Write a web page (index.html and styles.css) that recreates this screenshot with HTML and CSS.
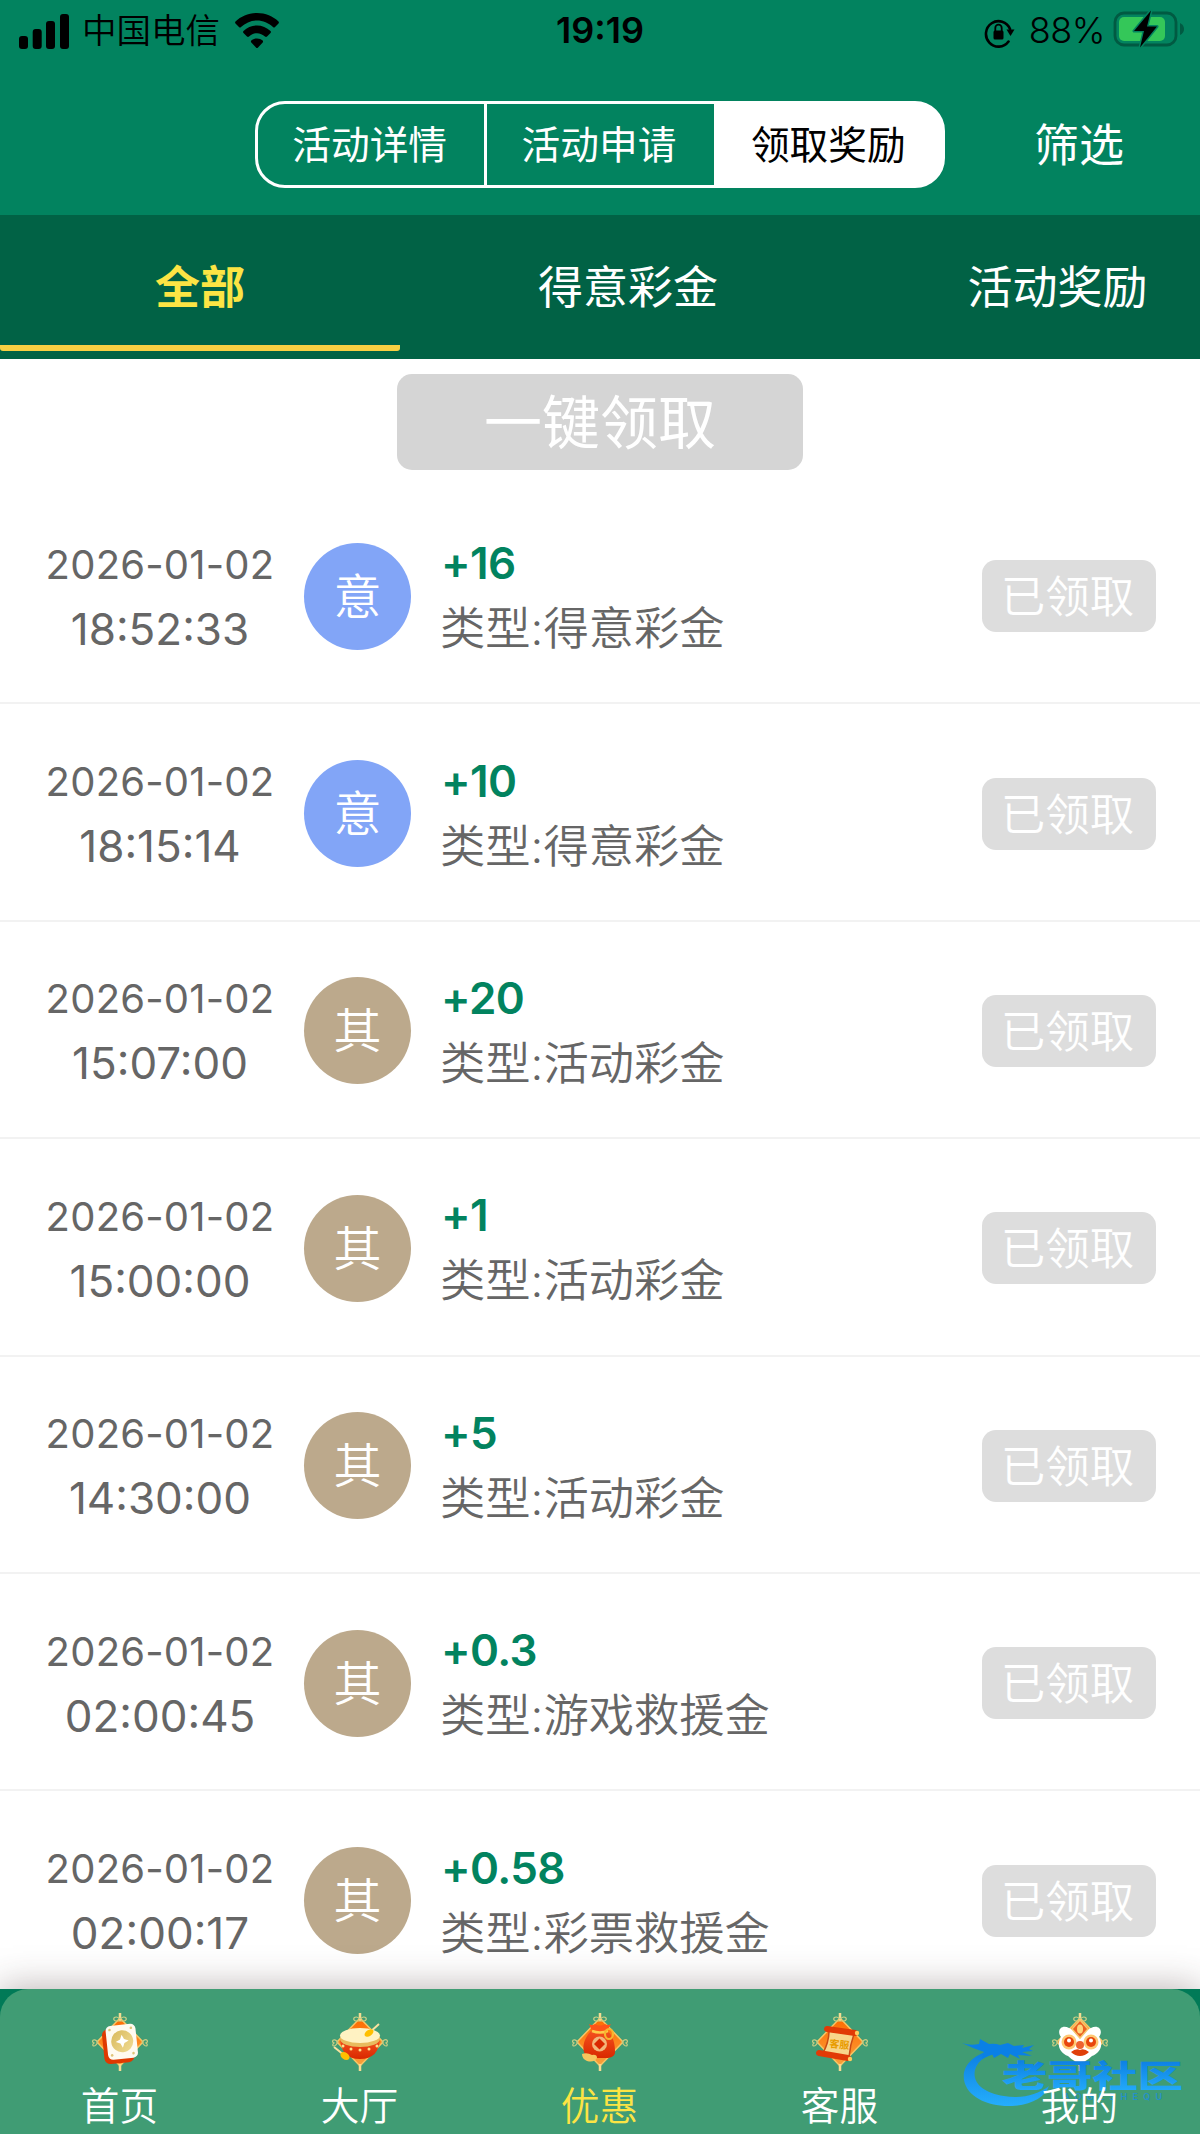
FILE: index.html
```html
<!DOCTYPE html>
<html lang="zh-CN">
<head>
  <meta charset="UTF-8">
  <title>领取奖励</title>
  <link rel="stylesheet" href="styles.css">
</head>
<body>

<div class="app">
  <header class="header">
    <div class="status-bar">
      <div class="status-left">
        <svg class="signal" viewBox="0 0 50 36"><rect x="0" y="22" width="9" height="13" rx="3"/><rect x="13.700" y="15" width="9" height="20" rx="3"/><rect x="27" y="7" width="9" height="28" rx="3"/><rect x="41" y="0" width="9" height="35" rx="3"/></svg>
        <span class="carrier">中国电信</span>
        <svg class="wifi" viewBox="0 0 44 36"><path d="M22 0C13.500 0 6 3.200 0.500 8.500Q-.3 9.500.5 10.400L4 14Q5 15 6 14C10.500 10 16 7.500 22 7.500S33.500 10 38 14Q39 15 40 14L43.500 10.400Q44.300 9.500 43.500 8.500C38 3.200 30.500 0 22 0ZM22 12.500C17 12.500 12.300 14.500 8.500 18Q7.600 19 8.500 20L12 23.500Q13 24.400 14 23.500C16.300 21.500 19 20.200 22 20.200S27.700 21.500 30 23.500Q31 24.400 32 23.500L35.500 20Q36.400 19 35.500 18C31.700 14.500 27 12.500 22 12.500ZM22 25.500C19.800 25.500 17.800 26.200 16.300 27.500Q15.500 28.500 16.300 29.500L21.200 34.700Q22 35.500 22.800 34.700L27.700 29.500Q28.500 28.500 27.700 27.500C26.200 26.200 24.200 25.500 22 25.500Z"/></svg>
      </div>
      <div class="status-time">19:19</div>
      <div class="status-right">
        <svg class="lock" viewBox="0 0 31 32"><path d="M24.500 24.500A12.500 12.700 0 1 1 26 12" fill="none" stroke="#000" stroke-width="2.600" stroke-linecap="round"/><path d="M22.500 12.500H30.500L26.500 19Z"/><rect x="9.500" y="13.500" width="10" height="9" rx="1.500"/><path d="M11.300 14.500V11a3.200 3.300 0 0 1 6.400 0V14.500" fill="none" stroke="#000" stroke-width="1.800"/></svg>
        <span class="percent">88%</span>
        <svg class="battery" viewBox="0 0 72 40"><rect x="2" y="4" width="61" height="32" rx="9" fill="none" stroke="#015a42" stroke-width="2.800"/><rect x="6" y="8" width="46" height="24" rx="5" fill="#34c759"/><path d="M67 14Q71 16 71 20T67 26Z" fill="#015a42"/><path d="M38 1.500L21 22H31L27 38.500L44 17.500H34Z" fill="#000" stroke="#02835f" stroke-width="3" paint-order="stroke" stroke-linejoin="round"/></svg>
      </div>
    </div>
    <div class="toolbar">
      <div class="segment">
        <div class="segment-item">活动详情</div>
        <div class="segment-item">活动申请</div>
        <div class="segment-item selected">领取奖励</div>
      </div>
      <div class="filter">筛选</div>
    </div>
  </header>

  <nav class="tabs">
    <div class="tab active"><span>全部</span></div>
    <div class="tab wide"><span>得意彩金</span></div>
    <div class="tab"><span>活动奖励</span></div>
  </nav>

  <main class="content">
    <button class="claim-all">一键领取</button>
    <div class="list">
      <div class="row">
        <div class="when"><div class="date">2026-01-02</div><div class="time">18:52:33</div></div>
        <div class="avatar blue">意</div>
        <div class="info"><div class="amount">+16</div><div class="type">类型:得意彩金</div></div>
        <div class="badge">已领取</div>
      </div>
      <div class="row">
        <div class="when"><div class="date">2026-01-02</div><div class="time">18:15:14</div></div>
        <div class="avatar blue">意</div>
        <div class="info"><div class="amount">+10</div><div class="type">类型:得意彩金</div></div>
        <div class="badge">已领取</div>
      </div>
      <div class="row">
        <div class="when"><div class="date">2026-01-02</div><div class="time">15:07:00</div></div>
        <div class="avatar">其</div>
        <div class="info"><div class="amount">+20</div><div class="type">类型:活动彩金</div></div>
        <div class="badge">已领取</div>
      </div>
      <div class="row">
        <div class="when"><div class="date">2026-01-02</div><div class="time">15:00:00</div></div>
        <div class="avatar">其</div>
        <div class="info"><div class="amount">+1</div><div class="type">类型:活动彩金</div></div>
        <div class="badge">已领取</div>
      </div>
      <div class="row">
        <div class="when"><div class="date">2026-01-02</div><div class="time">14:30:00</div></div>
        <div class="avatar">其</div>
        <div class="info"><div class="amount">+5</div><div class="type">类型:活动彩金</div></div>
        <div class="badge">已领取</div>
      </div>
      <div class="row">
        <div class="when"><div class="date">2026-01-02</div><div class="time">02:00:45</div></div>
        <div class="avatar">其</div>
        <div class="info"><div class="amount">+0.3</div><div class="type">类型:游戏救援金</div></div>
        <div class="badge">已领取</div>
      </div>
      <div class="row">
        <div class="when"><div class="date">2026-01-02</div><div class="time">02:00:17</div></div>
        <div class="avatar">其</div>
        <div class="info"><div class="amount">+0.58</div><div class="type">类型:彩票救援金</div></div>
        <div class="badge">已领取</div>
      </div>
    </div>
  </main>

  <footer class="bottom">
    <svg class="defs">
      <defs>
        <linearGradient id="orange" x1="0" y1="0" x2="0" y2="1"><stop offset="0" stop-color="#ff6a00"/><stop offset="1" stop-color="#f9a13c"/></linearGradient>
        <linearGradient id="red" x1="0" y1="0" x2="0" y2="1"><stop offset="0" stop-color="#f4511e"/><stop offset="1" stop-color="#d92800"/></linearGradient>
        <linearGradient id="gold" x1="0" y1="0" x2="1" y2="1"><stop offset="0" stop-color="#d9b95c"/><stop offset="1" stop-color="#f0dc94"/></linearGradient>
        <linearGradient id="brand" x1="0" y1="0" x2="0" y2="1"><stop offset="0" stop-color="#0a7be0"/><stop offset="1" stop-color="#25aefc"/></linearGradient>
        <g id="knot">
          <path d="M28 5L51 29L28 53L5 29Z" fill="url(#orange)" stroke="#f8c565" stroke-width="1.500"/>
          <path d="M28 0V8M28 51V58" stroke="#f7dc91" stroke-width="2.500"/>
          <path d="M28 6C23 1 19 7 24 8H32C37 7 33 1 28 6M6 29C1 24-1 29 2 30C-1 32 2 36 6 29M50 29C55 24 57 29 54 30C57 32 54 36 50 29" fill="none" stroke="#c5cd84" stroke-width="1.200"/>
        </g>
      </defs>
    </svg>
    <div class="bottom-bar">
      <div class="nav-item">
        <svg class="nav-icon" viewBox="0 0 56 58"><use href="#knot"/>
          <g transform="rotate(-6 28 31)"><rect x="11" y="15" width="30" height="35" rx="6" fill="#df3900"/><rect x="15" y="12" width="30" height="34" rx="5" fill="#fffaf0"/><circle cx="30.500" cy="28.500" r="11" fill="url(#gold)"/><path d="M30.500 22L32.500 26.500L37 28.500L32.500 30.500L30.500 35L28.500 30.500L24 28.500L28.500 26.500Z" fill="#fff"/><g fill="#dfc478"><circle cx="19" cy="16" r="1.300"/><circle cx="40.500" cy="16" r="1.300"/><circle cx="19" cy="41.500" r="1.300"/><circle cx="40.500" cy="41.500" r="1.300"/></g></g>
        </svg>
        <span>首页</span>
      </div>
      <div class="nav-item">
        <svg class="nav-icon" viewBox="0 0 56 58"><use href="#knot"/>
          <path d="M8 26C9 39 15 46 28 46S47 39 48 26Z" fill="url(#red)"/><ellipse cx="28" cy="26" rx="20" ry="8" fill="#e8bb5e"/><ellipse cx="28" cy="22.500" rx="20" ry="7.500" fill="#fff2c2"/><g fill="#ffe08a"><circle cx="11" cy="33" r="1.500"/><circle cx="19" cy="36" r="1.500"/><circle cx="28" cy="37" r="1.500"/><circle cx="37" cy="36" r="1.500"/><circle cx="45" cy="33" r="1.500"/></g>
          <path d="M47 11L37 20M2 34L12 42" stroke="#f7e2a0" stroke-width="2"/><ellipse cx="37" cy="20" rx="5" ry="3" transform="rotate(-35 37 20)" fill="#ffbf00"/><ellipse cx="13" cy="43" rx="5" ry="3.500" transform="rotate(35 13 43)" fill="#ffbf00"/>
        </svg>
        <span>大厅</span>
      </div>
      <div class="nav-item current">
        <svg class="nav-icon" viewBox="0 0 56 58"><use href="#knot"/>
          <path d="M19 18C13 24 10 33 12 39Q13 45 22 45H36Q44 44 43 38C43 31 41 23 36 18Z" fill="url(#red)"/><path d="M17 11Q20 13 23 11Q28 14 33 11Q36 13 39 11L35 18H20Z" fill="#ff5418"/><path d="M20 18Q28 21 36 18" stroke="#ffca48" stroke-width="2.500" fill="none"/><ellipse cx="37" cy="21" rx="4" ry="5" fill="none" stroke="#f6b52f" stroke-width="2.200"/><circle cx="27.500" cy="31" r="7.500" fill="#f3b57a"/><path d="M27.500 25.500L33 31L27.500 36.500L22 31Z" fill="#da2700"/><path d="M10 41Q15 39 20 42Q25 41 25 45Q22 50 15 48Q10 46 10 41Z" fill="#f6c65e"/>
        </svg>
        <span>优惠</span>
      </div>
      <div class="nav-item">
        <svg class="nav-icon" viewBox="0 0 56 58"><use href="#knot"/>
          <path d="M17 18L42 21Q38 32 37 44L11 40Q17 29 17 18Z" fill="#f8d58a" stroke="#c94a14" stroke-width="1.500"/><path d="M15 16L43 20M7 40L36 45" stroke="#e13a06" stroke-width="6" stroke-linecap="round"/><circle cx="45" cy="20" r="2.200" fill="#ffcb5c"/><circle cx="38" cy="46" r="2.200" fill="#ffcb5c"/>
          <text x="17" y="34" class="scroll-text" transform="rotate(6 17 34)">客服</text>
        </svg>
        <span>客服</span>
      </div>
      <div class="nav-item">
        <svg class="nav-icon" viewBox="0 0 56 58"><use href="#knot"/>
          <path d="M9 24C4 17 10 11 17 15Q22 18 28 18Q34 18 39 15C46 11 52 17 47 24C52 32 48 40 40 43Q34 49 28 49Q22 49 16 43C8 40 4 32 9 24Z" fill="#fff"/>
          <path d="M28 7L36 16L28 25L20 16Z" fill="#ed6122" stroke="#f5c66c" stroke-width="1.500"/><ellipse cx="28" cy="16" rx="3" ry="4.500" fill="#ffd57d"/>
          <circle cx="17" cy="29" r="7.500" fill="#ffc873"/><circle cx="39" cy="29" r="7.500" fill="#ffc873"/><circle cx="17" cy="29" r="5" fill="#e8460c"/><circle cx="39" cy="29" r="5" fill="#e8460c"/><circle cx="17" cy="27.500" r="2" fill="#fff"/><circle cx="39" cy="27.500" r="2" fill="#fff"/><circle cx="28" cy="32" r="4" fill="#ee6330"/><path d="M19 39Q24 35 28 37Q32 35 37 39Q33 43 28 43T19 39Z" fill="#e03f0a"/>
        </svg>
        <span class="on-top">我的</span>
      </div>
    </div>
    <svg class="watermark" viewBox="0 0 230 72">
      <path d="M34 9C10 16 0 27 2 41C5 58 26 68 50 67C70 66 83 58 87 47C75 56 59 60 42 57C22 54 10 44 13 31C16 20 27 15 40 14Z" fill="url(#brand)"/>
      <path d="M0 4Q8 7 17 5L18 0L27 5Q33 4 38 6L46 4L52 7L62 6L60 9L72 6L67 10L71 12L60 13L70 17L56 16L58 20L48 15L46 19L39 15L32 19L30 15L20 20L22 13Q10 9 0 4Z" fill="#0a80e6"/>
      <text x="40" y="48" textLength="181" lengthAdjust="spacingAndGlyphs" class="brand-name">老哥社区</text>
      <text x="91" y="61" textLength="109" class="brand-latin">LAOGESHEQU</text>
    </svg>
  </footer>
</div>

</body>
</html>
```
FILE: styles.css
```css
* {
  box-sizing: border-box;
}

body {
  margin: 0;
  background: #fff;
  font-family: Inter, "Noto Sans CJK SC", sans-serif;
}

.app {
  width: 1200px;
  height: 2134px;
  display: flex;
  flex-direction: column;
  overflow: hidden;
  position: relative;
}

.header {
  height: 215px;
  background: #02835f;
  flex: none;
}

.status-bar {
  height: 62px;
  display: grid;
  grid-template-columns: 1fr 200px 1fr;
  align-items: center;
  padding: 0 15px 0 19px;
}

.status-left,
.status-right {
  display: flex;
  align-items: center;
}

.status-right {
  justify-content: flex-end;
}

.signal {
  width: 50px;
  height: 36px;
  margin-top: 2px;
}

.carrier {
  font-size: 34.5px;
  font-weight: 350;
  margin-left: 13px;
  line-height: 60px;
}

.wifi {
  width: 44px;
  height: 36px;
  margin-left: 15px;
}

.status-time {
  text-align: center;
  font-size: 36px;
  font-weight: 600;
  line-height: 58px;
  padding-right: 4px;
  margin-top: -2px;
}

.lock {
  width: 31px;
  height: 32px;
  margin-top: 3px;
}

.percent {
  font-size: 36px;
  font-weight: 350;
  letter-spacing: -0.5px;
  margin-left: 14px;
  margin-top: -2px;
}

.battery {
  width: 72px;
  height: 40px;
  margin-left: 8px;
  margin-top: -4px;
}

.toolbar {
  display: flex;
  align-items: center;
  padding-left: 255px;
  margin-top: 39px;
}

.segment {
  width: 690px;
  height: 87px;
  display: flex;
  border: 3px solid #fff;
  border-radius: 30px;
  overflow: hidden;
  background: linear-gradient(#fff, #fff) right / 60px 100% no-repeat;
}

.segment-item {
  flex: 1;
  color: #fff;
  font-size: 38.7px;
  line-height: 83px;
  text-align: center;
  padding-right: 3px;
}

.segment-item + .segment-item {
  border-left: 3px solid #fff;
}

.segment-item.selected {
  background: #fff;
  color: #000;
  padding-right: 2px;
}

.filter {
  margin-left: 89px;
  color: #fff;
  font-size: 45px;
  line-height: 80px;
  padding-top: 3px;
}

.tabs {
  height: 144px;
  display: flex;
  flex: none;
  background: #016245;
  color: #fff;
  font-size: 45px;
  overflow: hidden;
}

.tab {
  width: 403px;
  flex: none;
  height: 136px;
  padding-top: 8px;
  line-height: 130px;
  text-align: center;
}

.tab.wide {
  width: 456px;
}

.tab.active {
  width: 400px;
  color: #fce444;
  font-weight: 600;
  background: linear-gradient(#f8cf43, #f8cf43) bottom / 100% 6px no-repeat;
  border-radius: 3px;
}

.content {
  flex: 1;
  display: flex;
  flex-direction: column;
  align-items: center;
  padding-top: 15px;
  min-height: 0;
}

.claim-all {
  width: 406px;
  height: 96px;
  flex: none;
  padding: 0;
  border: none;
  border-radius: 15px;
  background: #d5d5d5;
  color: #fff;
  font-family: inherit;
  font-size: 58px;
  line-height: 98px;
}

.list {
  width: 100%;
  margin-top: 17px;
}

.row {
  height: 217.4px;
  display: flex;
  align-items: center;
  padding: 3px 44px 0 16px;
  border-bottom: 2px solid #f2f2f2;
  color: #666;
}

.when {
  width: 288px;
  text-align: center;
}

.date {
  font-size: 40px;
  letter-spacing: 0.2px;
  line-height: 65px;
  padding-top: 1px;
}

.time {
  font-size: 44px;
  line-height: 65px;
}

.avatar {
  width: 107px;
  height: 107px;
  border-radius: 50%;
  background: #bca98c;
  color: #fff;
  font-size: 48px;
  font-weight: 350;
  line-height: 108px;
  text-align: center;
}

.avatar.blue {
  background: #82a5f7;
}

.info {
  flex: 1;
  margin-left: 30px;
}

.amount {
  color: #02835f;
  font-size: 44px;
  font-weight: 600;
  letter-spacing: -0.6px;
  line-height: 65px;
}

.type {
  font-size: 45.3px;
  font-weight: 350;
  line-height: 65px;
  margin-left: -1px;
}

.badge {
  width: 174px;
  height: 72px;
  border-radius: 14px;
  background: #ddd;
  color: #fff;
  font-size: 44.5px;
  font-weight: 350;
  line-height: 74px;
  text-align: center;
  padding-right: 3px;
}

.bottom {
  height: 145px;
  flex: none;
  position: relative;
  background: #017a57;
  box-shadow: 0 0 36px rgba(60, 40, 40, 0.38);
}

.defs {
  position: absolute;
  width: 0;
  height: 0;
}

.bottom-bar {
  height: 145px;
  display: flex;
  background: #409c74;
  border-radius: 28px 28px 0 0;
}

.nav-item {
  flex: 1;
  display: flex;
  flex-direction: column;
  align-items: center;
  padding-top: 24px;
  padding-right: 1px;
  color: #fff;
  font-size: 38.7px;
  font-weight: 350;
  line-height: 70px;
}

.nav-item.current {
  color: #fce444;
}

.nav-icon {
  width: 56px;
  height: 58px;
  flex: none;
  overflow: visible;
}

.scroll-text {
  font-size: 10px;
  font-weight: 700;
  fill: #e89c00;
}

/* community logo laid over the last nav item */
.watermark {
  position: absolute;
  left: 962px;
  top: 50px;
  width: 230px;
  height: 72px;
}

.on-top {
  position: relative;
  z-index: 1;
}

.brand-name {
  font-size: 31px;
  font-weight: 900;
  fill: url(#brand);
}

.brand-latin {
  font-size: 9px;
  font-weight: 600;
  fill: #2590c8;
}
```
